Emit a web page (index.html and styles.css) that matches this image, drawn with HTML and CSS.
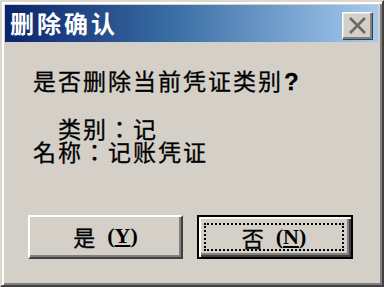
FILE: index.html
```html
<!DOCTYPE html>
<html>
<head>
<meta charset="utf-8">
<link rel="stylesheet" href="styles.css">
</head>
<body>
<div class="window">
  <div class="titlebar">
    <span class="title">删除确认</span>
    <span class="close"><svg width="19" height="17" viewBox="0 0 19 17"><path d="M2 1 L17 16 M17 1 L2 16" stroke="#6a6a6a" stroke-width="2.6" fill="none"/></svg></span>
  </div>
  <div class="content">
    <div class="question">是否删除当前凭证类别<span class="q">?</span></div>
    <div class="lines">　类别：记
名称：记账凭证</div>
  </div>
  <div class="buttons">
    <div class="btn"><span class="cjk">是</span><span class="acc">(<u>Y</u>)</span></div>
    <div class="btn default"><div class="focus"><span class="cjk">否</span><span class="acc">(<u>N</u>)</span></div></div>
  </div>
</div>
</body>
</html>
```
FILE: styles.css
```css
html, body {
  margin: 0;
  padding: 0;
  background: #d4d0c8;
}
.window {
  box-sizing: border-box;
  width: 384px;
  height: 287px;
  background: #d4d0c8;
  border: 2px solid;
  border-color: #dcd8d0 #404040 #404040 #dcd8d0;
  box-shadow: inset 2px 2px #ffffff, inset -2px -2px #808080;
  padding: 3px 4px 3px 3px;
  font-family: "Noto Sans CJK SC", "Liberation Sans", sans-serif;
  color: #000;
}
.titlebar {
  height: 37px;
  background: linear-gradient(to right, #0a246a 0%, #3a6ea5 45%, #a6caf0 100%);
  display: flex;
  align-items: center;
  justify-content: space-between;
  padding: 0 5px 0 5px;
}
.title {
  color: #fff;
  font-weight: bold;
  font-size: 24px;
  line-height: 24px;
  letter-spacing: 3px;
  margin-top: -2px;
}
.close {
  box-sizing: border-box;
  width: 31px;
  height: 28px;
  background: #d4d0c8;
  border: 1px solid;
  border-color: #ffffff #404040 #404040 #ffffff;
  box-shadow: inset -2px -2px #808080, inset 1px 1px #e8e6e0;
  display: flex;
  align-items: center;
  justify-content: center;
  margin-top: 4px;
}
.content {
  padding-left: 28px;
  margin-top: 26px;
  -webkit-text-stroke: 0.3px #000;
}
.question {
  font-size: 23px;
  line-height: 24px;
  letter-spacing: 2px;
  margin-bottom: 23px;
}
.q {
  font-family: "Liberation Sans", sans-serif;
  font-weight: bold;
  font-size: 24px;
  margin-left: 1px;
}
.lines {
  font-family: "Noto Sans CJK TC", "Noto Sans CJK SC", sans-serif;
  white-space: pre-line;
  font-size: 23px;
  line-height: 23px;
  letter-spacing: 2px;
}
.buttons {
  display: flex;
  gap: 14px;
  padding-left: 23px;
  margin-top: 52px;
}
.btn {
  box-sizing: border-box;
  width: 155px;
  height: 44px;
  background: #d4d0c8;
  border: 2px solid;
  border-color: #ffffff #404040 #404040 #ffffff;
  box-shadow: inset -2px -2px #808080;
  display: flex;
  align-items: center;
  justify-content: center;
  padding-bottom: 2px;
}
.btn.default {
  width: 156px;
  border: 2px solid #000;
  box-shadow: inset 2px 2px #ffffff, inset -2px -2px #404040, inset -4px -4px #808080;
  padding: 6px 7px 6px 5px;
}
.focus {
  box-sizing: border-box;
  width: 100%;
  height: 100%;
  border: 2px dotted #000;
  display: flex;
  align-items: center;
  justify-content: center;
}
.cjk {
  font-size: 22px;
  line-height: 22px;
  -webkit-text-stroke: 0.3px #000;
}
.acc {
  font-family: "Liberation Serif", serif;
  font-size: 22px;
  font-weight: bold;
  margin-left: 12px;
}
.acc u {
  text-underline-offset: 2px;
}
```
